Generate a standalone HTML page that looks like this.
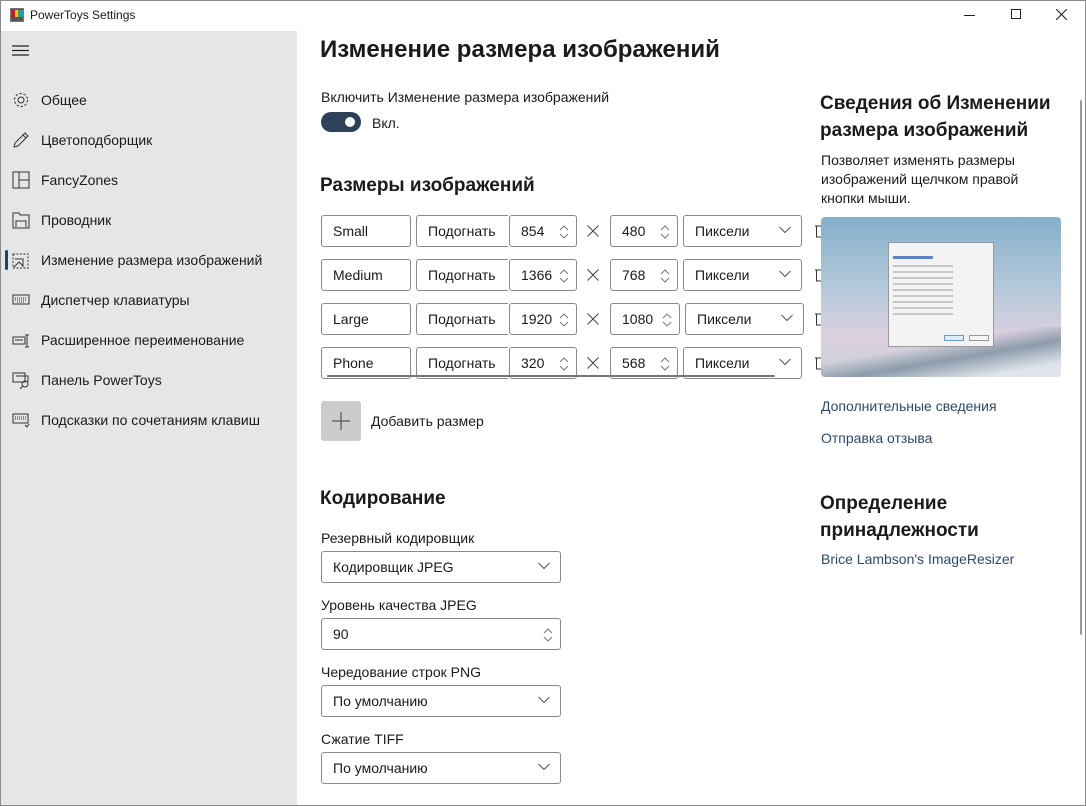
<!DOCTYPE html>
<html><head><meta charset="utf-8"><style>
*{box-sizing:border-box;margin:0;padding:0}
body{width:1086px;height:806px;overflow:hidden;background:#fff;font-family:"Segoe UI","Liberation Sans","DejaVu Sans",sans-serif;color:#1a1a1a;position:relative;font-size:14px}
.a{position:absolute}
.win{position:absolute;left:0;top:0;width:1086px;height:806px;border:1px solid #8a8a8a;pointer-events:none}
.side{left:1px;top:31px;width:296px;height:774px;background:#e6e6e6}
.nav{position:absolute;left:41px;font-size:14px;color:#1a1a1a}
.ico{position:absolute;left:12px;width:18px;height:18px}
.box{position:absolute;height:32px;border:1px solid #8a8a8a;border-radius:3px;background:#fff;font-size:14px;padding-left:11px;line-height:30px}
.chev{position:absolute;right:10px;top:10px}
.spin{position:absolute;right:6px;top:8px}
h1{font-size:24px;font-weight:600}
h2{font-size:19px;font-weight:600}
.lbl{font-size:14px}
.link{color:#2b4a6e;font-size:14px}
</style></head><body>
<div class="a" style="left:10px;top:8px;width:14px;height:14px;background:#555;border:1px solid #777">
<div class="a" style="left:1px;top:1px;width:3px;height:7px;background:#e03"></div>
<div class="a" style="left:4px;top:1px;width:3px;height:7px;background:#fc0"></div>
<div class="a" style="left:7px;top:1px;width:3px;height:7px;background:#1a8"></div>
<div class="a" style="left:10px;top:1px;width:2px;height:7px;background:#38f"></div>
</div>
<div class="a" style="left:30px;top:8px;font-size:12px">PowerToys Settings</div>
<div class="a" style="left:964px;top:15px;width:11px;height:1px;background:#222"></div>
<div class="a" style="left:1011px;top:9px;width:10px;height:10px;border:1px solid #222"></div>
<svg class="a" style="left:1056px;top:9px" width="11" height="11"><path d="M0 0L11 11M11 0L0 11" stroke="#222" stroke-width="1.1"/></svg>

<div class="a side"></div>
<svg class="a" style="left:12px;top:45px" width="18" height="12"><path d="M0 1h17M0 5.5h17M0 10h17" stroke="#222" stroke-width="1.2"/></svg>
<div class="a" style="left:5px;top:250px;width:3px;height:20px;background:#2d4259;border-radius:2px"></div>
<svg class="ico" style="top:91px" viewBox="0 0 18 18"><circle cx="9" cy="9" r="3" fill="none" stroke="#333"/><circle cx="9" cy="9" r="6.5" fill="none" stroke="#333" stroke-dasharray="2.5 1.6"/></svg>
<div class="nav" style="top:92px">Общее</div>
<svg class="ico" style="top:131px" viewBox="0 0 18 18"><path d="M2 16l1-4 8-8 3 3-8 8zM11 4l2-2 3 3-2 2" fill="none" stroke="#333"/></svg>
<div class="nav" style="top:132px">Цветоподборщик</div>
<svg class="ico" style="top:171px" viewBox="0 0 18 18"><path d="M1 1h16v16H1zM7 1v16M7 9h10" fill="none" stroke="#333"/></svg>
<div class="nav" style="top:172px">FancyZones</div>
<svg class="ico" style="top:211px" viewBox="0 0 18 18"><path d="M1 2h6l1 2h9v13H1zM4 16v-6h10v6" fill="none" stroke="#333"/></svg>
<div class="nav" style="top:212px">Проводник</div>
<svg class="ico" style="top:251px" viewBox="0 0 18 18"><path d="M1 3h15v14H1z" fill="none" stroke="#333" stroke-dasharray="2 1.5"/><path d="M2 16l5-5 4 4M3 8h8v8" fill="none" stroke="#333"/></svg>
<div class="nav" style="top:252px">Изменение размера изображений</div>
<svg class="ico" style="top:291px" viewBox="0 0 18 18"><rect x="1" y="4" width="16" height="9" fill="none" stroke="#333"/><path d="M3 7h12M3 9h12M5 11h8" stroke="#333" stroke-dasharray="1 1"/></svg>
<div class="nav" style="top:292px">Диспетчер клавиатуры</div>
<svg class="ico" style="top:331px" viewBox="0 0 18 18"><path d="M1 6h12v7H1zM3 9h8M15 4v12M13 4h4M13 16h4" fill="none" stroke="#333"/></svg>
<div class="nav" style="top:332px">Расширенное переименование</div>
<svg class="ico" style="top:371px" viewBox="0 0 18 18"><path d="M1 2h12v9H1zM4 5h12v6" fill="none" stroke="#333"/><circle cx="13" cy="13" r="3" fill="none" stroke="#333"/><path d="M11 15l-3 3" stroke="#333"/></svg>
<div class="nav" style="top:372px">Панель PowerToys</div>
<svg class="ico" style="top:411px" viewBox="0 0 18 18"><rect x="1" y="3" width="15" height="9" fill="none" stroke="#333"/><path d="M3 6h11M3 8h11" stroke="#333" stroke-dasharray="1 1"/><path d="M13 14l2 2 2-3" fill="none" stroke="#333"/></svg>
<div class="nav" style="top:412px">Подсказки по сочетаниям клавиш</div>

<h1 class="a" style="left:320px;top:36px">Изменение размера изображений</h1>
<div class="a lbl" style="left:321px;top:89px">Включить Изменение размера изображений</div>
<div class="a" style="left:321px;top:112px;width:40px;height:20px;border-radius:10px;background:#2d4259"><div class="a" style="left:24px;top:5px;width:10px;height:10px;border-radius:5px;background:#fff"></div></div>
<div class="a lbl" style="left:372px;top:115px">Вкл.</div>
<h2 class="a" style="left:320px;top:175px">Размеры изображений</h2>

<div id="rows"></div>
<script>
var rows=[["Small","854","480",215,683],["Medium","1366","768",259,683],["Large","1920","1080",303,685],["Phone","320","568",347,683]];
var h="";
var chev='<svg class="chev" width="12" height="8"><path d="M0.5 1L6 6.5L11.5 1" fill="none" stroke="#555"/></svg>';
var spin='<svg class="spin" width="12" height="16"><path d="M2 6L6 2L10 6M2 10L6 14L10 10" fill="none" stroke="#777"/></svg>';
rows.forEach(function(r){var y=r[3];
h+='<div class="box" style="left:321px;top:'+y+'px;width:90px">'+r[0]+'</div>';
h+='<div class="box" style="left:416px;top:'+y+'px;width:92px;border-right:none;border-radius:3px 0 0 3px">Подогнать</div>';
h+='<div class="box" style="left:509px;top:'+y+'px;width:68px">'+r[1]+spin+'</div>';
h+='<svg class="a" style="left:587px;top:'+(y+10)+'px" width="12" height="12"><path d="M0.5 0.5L11.5 11.5M11.5 0.5L0.5 11.5" stroke="#444"/></svg>';
h+='<div class="box" style="left:610px;top:'+y+'px;width:'+(r[4]==685?70:68)+'px">'+r[2]+spin+'</div>';
h+='<div class="box" style="left:'+r[4]+'px;top:'+y+'px;width:119px">Пиксели'+chev+'</div>';
h+='<svg class="a" style="left:815px;top:'+(y+9)+'px" width="6" height="14"><path d="M0 2h6M1.5 2v11h5" fill="none" stroke="#333"/></svg>';
});
h+='<div class="a" style="left:327px;top:375px;width:448px;height:2px;background:#777;border-radius:1px"></div>';
document.getElementById("rows").innerHTML=h;
</script>

<div class="a" style="left:321px;top:401px;width:40px;height:40px;background:#ccc;border-radius:3px"><svg class="a" style="left:11px;top:11px" width="18" height="18"><path d="M9 0v18M0 9h18" stroke="#555" stroke-width="1.2"/></svg></div>
<div class="a lbl" style="left:371px;top:413px">Добавить размер</div>

<h2 class="a" style="left:320px;top:488px">Кодирование</h2>
<div class="a lbl" style="left:321px;top:530px">Резервный кодировщик</div>
<div class="box" style="left:321px;top:551px;width:240px">Кодировщик JPEG<svg class="chev" width="12" height="8"><path d="M0.5 1L6 6.5L11.5 1" fill="none" stroke="#555"/></svg></div>
<div class="a lbl" style="left:321px;top:597px">Уровень качества JPEG</div>
<div class="box" style="left:321px;top:618px;width:240px">90<svg class="spin" width="12" height="16"><path d="M2 6L6 2L10 6M2 10L6 14L10 10" fill="none" stroke="#777"/></svg></div>
<div class="a lbl" style="left:321px;top:664px">Чередование строк PNG</div>
<div class="box" style="left:321px;top:685px;width:240px">По умолчанию<svg class="chev" width="12" height="8"><path d="M0.5 1L6 6.5L11.5 1" fill="none" stroke="#555"/></svg></div>
<div class="a lbl" style="left:321px;top:731px">Сжатие TIFF</div>
<div class="box" style="left:321px;top:752px;width:240px">По умолчанию<svg class="chev" width="12" height="8"><path d="M0.5 1L6 6.5L11.5 1" fill="none" stroke="#555"/></svg></div>

<h2 class="a" style="left:820px;top:90px;line-height:27px">Сведения об Изменении<br>размера изображений</h2>
<div class="a lbl" style="left:821px;top:151px;line-height:19px">Позволяет изменять размеры<br>изображений щелчком правой<br>кнопки мыши.</div>
<div class="a" style="left:821px;top:217px;width:240px;height:160px;border-radius:4px;overflow:hidden;background:linear-gradient(180deg,#85afcb 0%,#b4c9da 45%,#dcd0e0 75%,#c9d0d8 100%)">
<div class="a" style="left:0;top:110px;width:240px;height:50px;background:linear-gradient(170deg,transparent 40%,#8c9cab 60%,#dfe4ea 85%)"></div>
<div class="a" style="left:67px;top:25px;width:106px;height:105px;background:#f3f3f3;border:1px solid #999">
<div class="a" style="left:4px;top:13px;width:40px;height:3px;background:#5a86c5"></div>
<div class="a" style="left:4px;top:22px;width:60px;height:50px;background:repeating-linear-gradient(180deg,#aaa 0 2px,transparent 2px 6px);opacity:.6"></div>
<div class="a" style="left:55px;top:92px;width:20px;height:6px;border:1px solid #6a9ad0;background:#e0ecf8"></div>
<div class="a" style="left:80px;top:92px;width:20px;height:6px;border:1px solid #999"></div>
</div></div>
<div class="a link" style="left:821px;top:398px">Дополнительные сведения</div>
<div class="a link" style="left:821px;top:430px">Отправка отзыва</div>
<h2 class="a" style="left:820px;top:490px;line-height:27px">Определение<br>принадлежности</h2>
<div class="a link" style="left:821px;top:551px">Brice Lambson's ImageResizer</div>
<div class="a" style="left:1080px;top:100px;width:2px;height:535px;background:#999;border-radius:1px"></div>
<div class="win"></div>
</body></html>
